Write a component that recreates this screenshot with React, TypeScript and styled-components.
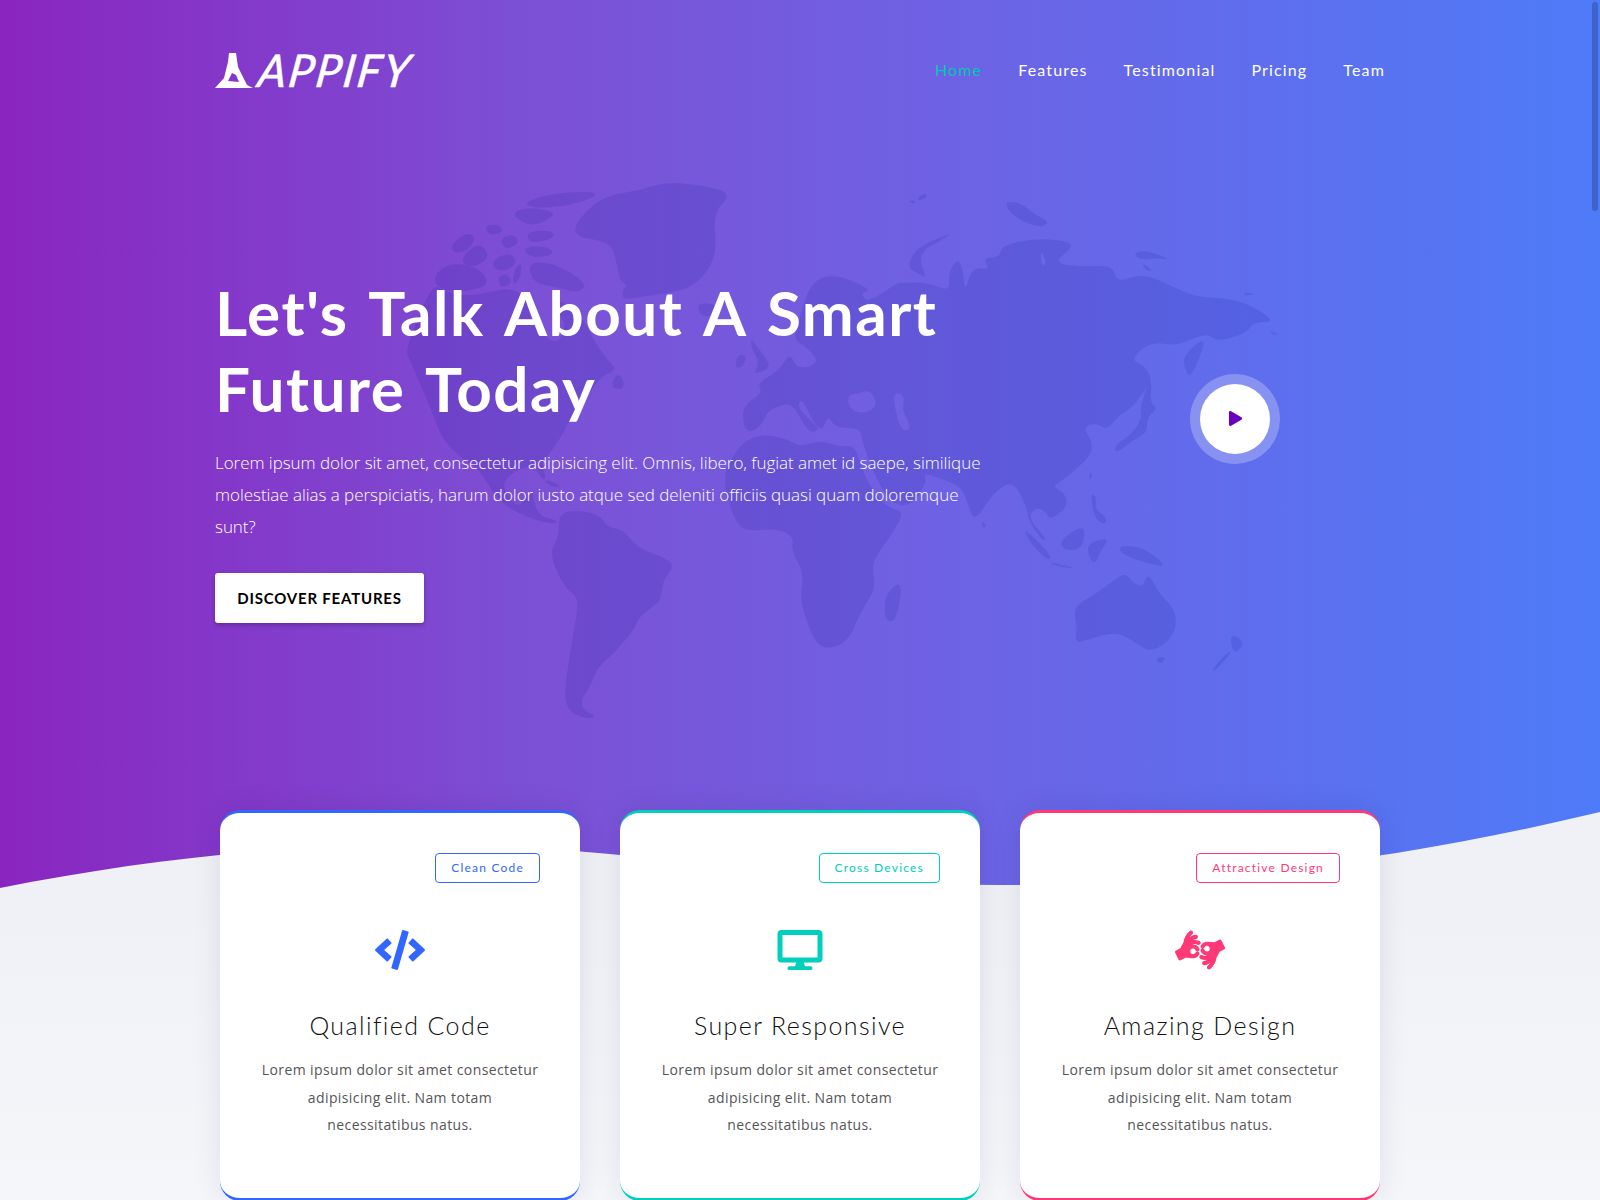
import React from "react";
import styled, { createGlobalStyle } from "styled-components";
import { FaCode, FaDesktop, FaAmericanSignLanguageInterpreting, FaPlay } from "react-icons/fa";

const GlobalStyle = createGlobalStyle`
  html, body { margin: 0; padding: 0; height: 1200px; overflow: hidden; background: #f4f5f9; }
  * { box-sizing: border-box; }
  body { font-family: "Open Sans", sans-serif; }
`;

const Page = styled.div`
  position: relative;
  width: 1600px;
  height: 1200px;
  overflow: hidden;
  background: linear-gradient(180deg, #f0f1f6 0, #f0f1f6 900px, #f5f6fa 1200px);
`;

const Hero = styled.header`
  position: relative;
  height: 900px;
  background: linear-gradient(90deg, #8a25c0 0%, #7c50d5 33%, #7060e2 56%, #4e7bf8 100%);
`;

const Backdrop = styled.svg`
  position: absolute;
  left: 0;
  top: 0;
  width: 1600px;
  height: 900px;
`;

const HeroInner = styled.div`
  position: relative;
  width: 1170px;
  margin: 0 auto;
`;

const NavBar = styled.nav`
  display: flex;
  align-items: center;
  justify-content: space-between;
  height: 139px;
`;

const Logo = styled.a`
  display: flex;
  align-items: center;
  gap: 6px;
  color: #fff;
  height: 40px;
`;

const LogoMark = styled.svg`
  width: 38px;
  height: 36px;
  margin-top: 2px;
`;

const LogoWord = styled.span`
  font-family: "Lato", sans-serif;
  font-size: 45px;
  font-style: italic;
  font-weight: 400;
  line-height: 40px;
  letter-spacing: 2px;
  -webkit-text-stroke: 0.6px #fff;
  display: inline-block;
  transform: skewX(-8deg);
  transform-origin: left center;
`;

const NavLinks = styled.ul`
  display: flex;
  gap: 36px;
  list-style: none;
  margin: 0;
  padding: 0;
`;

const NavLink = styled.li<{ $active?: boolean }>`
  font-family: "Lato", sans-serif;
  font-size: 16px;
  letter-spacing: 1.15px;
  line-height: 20px;
  color: ${(p) => (p.$active ? "#00c9b8" : "#ffffff")};
`;

const HeroBody = styled.div`
  display: grid;
  grid-template-columns: 870px 300px;
  align-items: center;
  padding-top: 135px;
`;

const Headline = styled.h1`
  margin: 0;
  font-family: "Lato", sans-serif;
  font-weight: 700;
  font-size: 62px;
  line-height: 76px;
  letter-spacing: 1.5px;
  word-spacing: 5px;
  color: #fff;
`;

const Lead = styled.p`
  width: 770px;
  margin: 21px 0 30px;
  font-family: "Open Sans", sans-serif;
  font-weight: 300;
  font-size: 17px;
  line-height: 32px;
  letter-spacing: -0.04px;
  color: #fff;
`;

const CtaButton = styled.a`
  display: inline-flex;
  align-items: center;
  justify-content: center;
  width: 209px;
  height: 50px;
  border-radius: 3px;
  background: #fff;
  box-shadow: 0 2px 4px rgba(0, 0, 0, 0.25);
  font-family: "Lato", sans-serif;
  font-weight: 700;
  font-size: 15px;
  letter-spacing: 0.8px;
  color: #000;
`;

const PlayCell = styled.div`
  display: flex;
  justify-content: center;
  align-items: center;
  margin-top: -60px;
`;

const PlayButton = styled.a`
  display: flex;
  align-items: center;
  justify-content: center;
  width: 70px;
  height: 70px;
  border-radius: 50%;
  background: #fff;
  color: #6a00bf;
  font-size: 15px;
  box-shadow: 0 0 0 10px rgba(255, 255, 255, 0.25);
`;

const CardsRow = styled.section`
  position: relative;
  display: grid;
  grid-template-columns: repeat(3, 360px);
  gap: 40px;
  justify-content: center;
  margin-top: -90px;
`;

const Card = styled.article<{ $c: string }>`
  display: flex;
  flex-direction: column;
  align-items: center;
  height: 391px;
  padding: 40px 40px 0;
  border-radius: 20px;
  background: #fff;
  border-top: 3px solid ${(p) => p.$c};
  border-bottom: 3px solid ${(p) => p.$c};
  box-shadow: 0 0 30px rgba(20, 20, 60, 0.09);
`;

const Tag = styled.span<{ $c: string }>`
  align-self: flex-end;
  height: 30px;
  padding: 0 15px;
  border: 1px solid ${(p) => p.$c};
  border-radius: 4px;
  font-family: "Lato", sans-serif;
  font-size: 12px;
  line-height: 28px;
  letter-spacing: 1.2px;
  color: ${(p) => p.$c};
`;

const IconSlot = styled.div<{ $c: string }>`
  display: flex;
  justify-content: center;
  height: 40px;
  margin-top: 47px;
  color: ${(p) => p.$c};
  svg {
    display: block;
    width: 50px;
    height: 40px;
  }
`;

const CardTitle = styled.h3`
  margin: 35px 0 0;
  font-family: "Lato", sans-serif;
  font-weight: 300;
  font-size: 25px;
  line-height: 40px;
  letter-spacing: 1.4px;
  color: #111;
`;

const CardText = styled.p`
  margin: 11px 0 0;
  width: 280px;
  text-align: center;
  font-family: "Open Sans", sans-serif;
  font-size: 14px;
  line-height: 27.5px;
  letter-spacing: 0.4px;
  color: #555;
`;

const ScrollThumb = styled.div`
  position: absolute;
  left: 1592px;
  top: 2px;
  width: 6px;
  height: 209px;
  border-radius: 3px;
  background: rgba(30, 40, 100, 0.3);
`;

const land = [
  // Greenland
  "572,227 600,197 640,190 667,182 700,185 733,193 713,213 717,250 707,273 690,288 667,293 640,297 623,300 622,290 628,286 620,280 618,270 613,247 600,240 580,238",
  // Canadian arctic
  "523,202 560,192 603,192 580,203 557,207 533,208",
  "510,213 530,207 557,212 545,222 528,226",
  "528,263 547,262 567,270 588,285 577,293 557,287 533,283",
  "526,232 552,230 555,238 530,244",
  "522,247 548,246 555,255 530,258",
  "484,226 498,224 504,232 490,236",
  "500,238 515,234 519,244 505,250",
  "450,245 468,232 476,238 468,250 455,254",
  "462,256 480,242 490,256 478,266 464,266",
  "495,258 510,253 518,262 505,272 492,268",
  "432,277 450,262 480,268 490,285 465,292 440,290",
  "498,276 508,274 512,284 500,288",
  "522,262 520,280 512,285 515,268",
  // North America
  "410,360 405,350 432,283 445,292 470,296 490,292 510,288 526,296 530,320 548,340 560,342 566,322 552,305 560,300 580,312 595,343 610,363 617,370 600,377 587,397 573,413 565,430 557,443 550,453 542,463 543,467 546,480 541,478 536,468 523,467 507,477 503,487 510,500 520,507 527,493 533,490 533,500 540,517 557,520 556,524 543,522 527,517 507,507 493,493 480,470 460,457 443,440 435,420 427,400 417,377",
  "617,373 624,380 623,390 610,387",
  "543,480 552,481 562,487 552,487",
  "697,302 720,305 717,315 700,317",
  // South America
  "559,513 578,510 600,515 607,527 624,530 636,547 670,560 673,568 663,580 661,600 651,608 639,617 634,630 619,647 612,655 598,667 590,687 581,700 583,710 598,717 583,719 568,710 564,693 571,647 578,607 576,595 564,587 549,553 559,537",
  // Africa
  "723,480 730,460 745,440 765,434 790,440 800,447 820,440 840,447 855,445 862,470 876,497 890,508 905,512 888,540 871,563 876,587 864,607 857,620 852,633 840,647 818,648 806,620 800,597 804,573 791,550 794,537 777,528 745,532 733,517",
  "898,582 902,590 896,620 887,622 884,610 886,595",
  // Great Britain, Ireland
  "750,337 762,353 772,368 752,375 760,363 752,350",
  "737,355 747,355 743,367 735,368",
  // Arctic Russia
  "952,233 933,240 915,250 907,267 917,273 927,278 920,263 923,250 940,241",
  "1133,253 1147,250 1172,260 1157,258 1140,260",
  "1142,263 1150,268 1152,272 1145,270",
  "918,197 925,193 928,197 918,201",
  "908,200 917,201 912,204",
  "1003,202 1020,202 1035,215 1050,222 1040,228 1015,218",
  "1244,292 1256,294 1244,296",
  "1270,331 1280,334 1272,335",
  // Kamchatka / Sakhalin / Japan
  "1183,357 1197,343 1205,340 1200,357 1190,378 1185,370",
  "1147,367 1152,384 1150,403 1158,408 1147,417 1147,433 1133,440 1117,453 1113,447 1133,433 1142,417 1140,407 1148,384",
  // Sri Lanka + islands
  "982,520 987,527 982,528",
  "1023,528 1040,543 1052,558 1047,560 1030,543",
  "1060,540 1083,525 1085,537 1080,550 1063,550",
  "1050,562 1073,567 1072,569 1050,564",
  "1088,543 1110,537 1100,552 1095,565 1088,555",
  "1090,493 1097,497 1095,510 1105,515 1107,525 1095,520",
  "1090,472 1093,475 1089,480",
  "1121,545 1145,548 1170,569 1136,560 1119,552",
  // Australia, NZ
  "1073,607 1097,593 1114,580 1126,573 1133,583 1143,587 1148,572 1160,595 1174,608 1177,627 1167,643 1150,652 1136,643 1128,638 1114,632 1087,640 1075,643 1077,627",
  "1155,657 1167,657 1160,665",
  "1230,633 1245,642 1237,652 1232,650",
  "1232,652 1213,673 1213,668 1228,652",
];

// Closed outline through the midpoints of the coast points, for a softer coastline.
const toD = (pts: string) => {
  const p = pts
    .trim()
    .split(" ")
    .map((s) => s.split(",").map(Number));
  const mid = (a: number[], b: number[]) => `${(a[0] + b[0]) / 2} ${(a[1] + b[1]) / 2}`;
  let d = "M" + mid(p[p.length - 1], p[0]);
  p.forEach((c, i) => {
    d += `Q${c[0]} ${c[1]} ${mid(c, p[(i + 1) % p.length])}`;
  });
  return d + "Z";
};

const eurasia =
  toD(
    "900,283 927,282 950,292 948,273 958,258 963,270 965,293 972,267 990,270 983,258 1000,257 1002,245 1040,238 1070,242 1072,248 1053,263 1083,267 1113,265 1117,283 1143,273 1173,287 1197,297 1223,298 1247,303 1277,322 1253,322 1247,333 1217,342 1207,333 1183,343 1173,345 1150,342 1130,360 1147,367 1150,383 1133,407 1117,417 1107,430 1097,423 1083,427 1093,443 1090,457 1063,480 1052,487 1065,493 1068,507 1050,520 1047,513 1038,507 1030,513 1032,523 1047,540 1042,540 1028,520 1027,507 1013,480 993,493 975,522 968,505 962,487 937,477 923,473 927,483 910,507 890,503 872,470 862,440 860,428 835,428 828,415 822,432 812,420 802,398 797,407 813,423 820,430 808,433 792,402 777,407 767,412 763,423 752,433 743,427 743,405 763,393 757,383 780,370 790,352 797,370 820,363 807,347 793,340 800,317 810,283 833,273 873,290 860,293 868,303 897,283"
  ) +
  toD("847,395 860,393 870,390 878,405 865,414 850,410") +
  toD("893,392 905,395 902,410 912,428 903,432 896,415") +
  toD("1040,250 1047,262 1042,268");

const App: React.FC = () => (
  <Page>
    <GlobalStyle />
    <Hero>
      <Backdrop viewBox="0 0 1600 900" aria-hidden="true">
        <g fill="rgb(0,10,140)" opacity="0.11">
          {land.map((pts, i) => (
            <path key={i} d={toD(pts)} />
          ))}
          <path d={eurasia} fillRule="evenodd" />
        </g>
        <path
          d="M0 888 C150 858 300 843 450 845 C650 848 800 885 1000 885 C1200 885 1400 860 1600 812 L1600 900 L0 900 Z"
          fill="#f0f1f6"
        />
      </Backdrop>
      <HeroInner>
        <NavBar>
          <Logo>
            <LogoMark viewBox="0 0 38 36" aria-hidden="true">
              <path
                fill="#fff"
                d="M14 0 L21 0 L23 14 L30 28 L32 32 L38 35 L0 35 L9 25 L13 9 Z M17 20 L13 28 L24 29 L21 22 Z"
                fillRule="evenodd"
              />
            </LogoMark>
            <LogoWord>APPIFY</LogoWord>
          </Logo>
          <NavLinks>
            <NavLink $active>Home</NavLink>
            <NavLink>Features</NavLink>
            <NavLink>Testimonial</NavLink>
            <NavLink>Pricing</NavLink>
            <NavLink>Team</NavLink>
          </NavLinks>
        </NavBar>
        <HeroBody>
          <div>
            <Headline>
              Let's Talk About A Smart
              <br />
              Future Today
            </Headline>
            <Lead>
              Lorem ipsum dolor sit amet, consectetur adipisicing elit. Omnis, libero, fugiat amet id saepe, similique
              molestiae alias a perspiciatis, harum dolor iusto atque sed deleniti officiis quasi quam doloremque sunt?
            </Lead>
            <CtaButton>DISCOVER FEATURES</CtaButton>
          </div>
          <PlayCell>
            <PlayButton>
              <FaPlay />
            </PlayButton>
          </PlayCell>
        </HeroBody>
      </HeroInner>
    </Hero>
    <CardsRow>
      <Card $c="#3366ff">
        <Tag $c="#3366ff">Clean Code</Tag>
        <IconSlot $c="#3366ff">
          <FaCode />
        </IconSlot>
        <CardTitle>Qualified Code</CardTitle>
        <CardText>Lorem ipsum dolor sit amet consectetur adipisicing elit. Nam totam necessitatibus natus.</CardText>
      </Card>
      <Card $c="#00cfbb">
        <Tag $c="#00cfbb">Cross Devices</Tag>
        <IconSlot $c="#00cfbb">
          <FaDesktop />
        </IconSlot>
        <CardTitle>Super Responsive</CardTitle>
        <CardText>Lorem ipsum dolor sit amet consectetur adipisicing elit. Nam totam necessitatibus natus.</CardText>
      </Card>
      <Card $c="#ff3977">
        <Tag $c="#ff3977">Attractive Design</Tag>
        <IconSlot $c="#ff3977">
          <FaAmericanSignLanguageInterpreting />
        </IconSlot>
        <CardTitle>Amazing Design</CardTitle>
        <CardText>Lorem ipsum dolor sit amet consectetur adipisicing elit. Nam totam necessitatibus natus.</CardText>
      </Card>
    </CardsRow>
    <ScrollThumb />
  </Page>
);

export default App;
